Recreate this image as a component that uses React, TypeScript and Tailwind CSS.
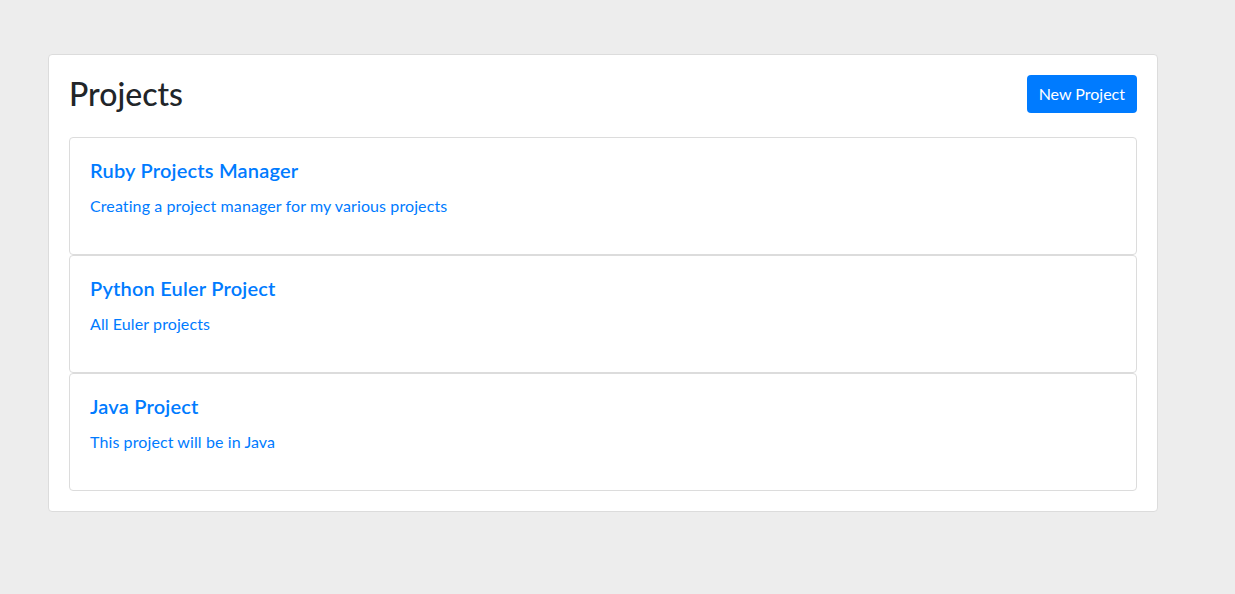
const projects = [
  { title: "Ruby Projects Manager", description: "Creating a project manager for my various projects" },
  { title: "Python Euler Project", description: "All Euler projects" },
  { title: "Java Project", description: "This project will be in Java" },
];

export default function App() {
  return (
    <div className="min-h-screen bg-[#ededed] pt-[54px] pl-[48px] font-['Lato','Liberation_Sans',sans-serif]">
      <div className="w-[1110px] rounded border border-[#dcdcdc] bg-white p-5">
        <div className="mb-6 flex items-center justify-between">
          <h1 className="text-[32px] font-medium leading-[38px] text-[#212529]">Projects</h1>
          <button
            type="button"
            className="h-[38px] rounded bg-[#007bff] px-3 text-base leading-6 text-white"
          >
            New Project
          </button>
        </div>
        <div className="flex flex-col">
          {projects.map((p) => (
            <a
              key={p.title}
              href="#"
              className="block rounded border border-[#dcdcdc] px-5 pt-5 pb-9 text-[#007bff]"
            >
              <h5 className="mb-3 text-xl font-semibold leading-6 tracking-[0.2px]">{p.title}</h5>
              <p className="text-base leading-6 tracking-[0.1px]">{p.description}</p>
            </a>
          ))}
        </div>
      </div>
    </div>
  );
}
